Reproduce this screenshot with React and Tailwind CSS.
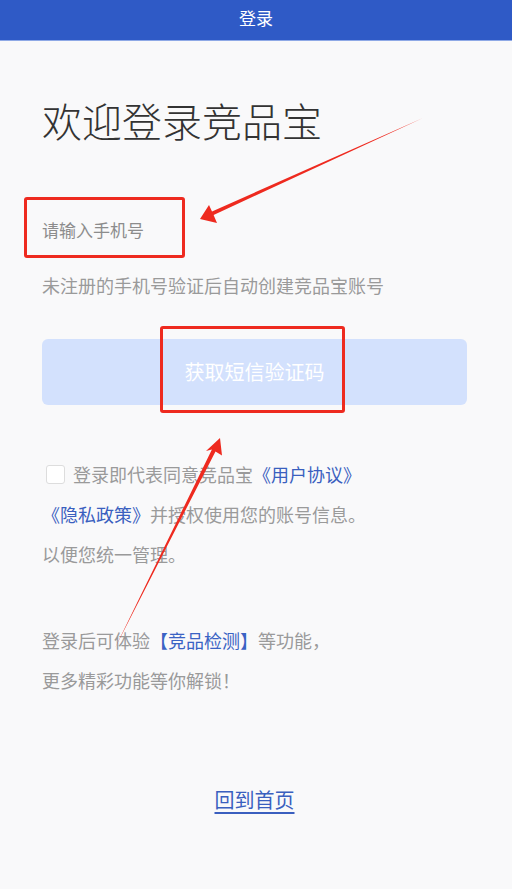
import React from "react";

export default function App() {
  return (
    <div className="relative min-h-screen w-full bg-[#f9f9fa] font-['Noto_Sans_CJK_SC','Noto_Sans',sans-serif]">
      {/* HEADER */}
      <div className="flex h-[41px] items-center justify-center bg-[#2f5ac6] border-b border-[#8fa9e6] pb-[4px]">
        <span className="text-[17px] text-white">登录</span>
      </div>

      <div className="pl-[42px] pr-[45px]">
        {/* TITLE */}
        <h1 className="mt-[55px] text-[40px] font-light leading-[48px] text-[#333333]">欢迎登录竞品宝</h1>

        {/* PHONE INPUT */}
        <div className="mt-[56px] flex h-[60px] items-center">
          <input
            type="tel"
            placeholder="请输入手机号"
            className="w-full bg-transparent text-[17px] text-[#333] outline-none placeholder:text-[#8c8c8c]"
          />
        </div>
        <p className="mt-[10px] text-[18px] leading-[30px] text-[#9a9a9a]">未注册的手机号验证后自动创建竞品宝账号</p>

        {/* SMS BUTTON */}
        <button className="mt-[39px] flex h-[66px] w-full items-center justify-center rounded-md bg-[#d3e1fd] text-[20px] text-white">
          获取短信验证码
        </button>

        {/* AGREEMENT */}
        <div className="mt-[49px] text-[18px] leading-[40px] text-[#9a9a9a]">
          <div className="flex items-center">
            <span className="ml-[4px] mr-[8px] inline-block h-[19px] w-[19px] rounded-[3px] border border-[#dddddd] bg-white" />
            <span>登录即代表同意竞品宝</span>
            <span className="text-[#3a5fbf]">《用户协议》</span>
          </div>
          <div>
            <span className="text-[#3a5fbf]">《隐私政策》</span>
            <span>并授权使用您的账号信息。</span>
          </div>
          <div>以便您统一管理。</div>
        </div>

        {/* FEATURES */}
        <div className="mt-[46px] text-[18px] leading-[40px] text-[#9a9a9a]">
          <div>
            登录后可体验<span className="text-[#3a63c4]">【竞品检测】</span>等功能，
          </div>
          <div>更多精彩功能等你解锁！</div>
        </div>

        {/* BACK HOME */}
        <div className="mt-[80px] text-center">
          <a href="#" className="text-[20px] leading-[40px] text-[#3a5fbf] underline underline-offset-4">
            回到首页
          </a>
        </div>
      </div>

      {/* ANNOTATIONS */}
      <div className="pointer-events-none absolute left-[24px] top-[197px] h-[61px] w-[161px] rounded-[3px] border-[3px] border-[#ee2a1f]" />
      <div className="pointer-events-none absolute left-[160px] top-[326px] h-[87px] w-[185px] rounded-[3px] border-[3px] border-[#ee2a1f]" />
      <svg
        className="pointer-events-none absolute left-0 top-0"
        width="512"
        height="889"
        viewBox="0 0 512 889"
      >
        <polygon
          points="423,118 213.6,215 217,223 200,219 209,205 212,211.4"
          fill="#ee2a1f"
        />
        <polygon
          points="115,648 211.9,449.6 206,451 220,438 222,455.5 215.5,451.4"
          fill="#ee2a1f"
        />
      </svg>
    </div>
  );
}
